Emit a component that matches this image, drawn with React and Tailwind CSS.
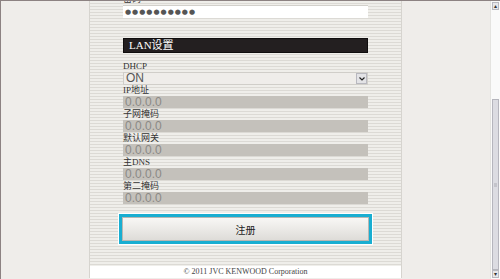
import React from 'react';

const fields = ['IP地址', '子网掩码', '默认网关', '主DNS', '第二掩码'];

const labelCls = "h-[12px] leading-[12px] text-[9px] text-[#333] font-['Liberation_Serif','Noto_Sans_CJK_SC',serif]";

function Field({ label }) {
    return (
        <div>
            <div className={labelCls}>{label}</div>
            <div className="h-[12px] bg-[#c4c1bb] pl-[2px] text-[12px] leading-[12px] text-[#8b8985] font-['Liberation_Sans',sans-serif]">
                0.0.0.0
            </div>
        </div>
    );
}

function Scrollbar() {
    return (
        <div className="w-[10px] flex flex-col bg-[#fafafa] border-l border-[#e4e3e0] pt-[1px] pb-[1px]">
            <div className="h-[8px] mx-[1px] bg-[#e7e7ea] border border-[#b9b9c0] flex items-center justify-center text-[6px] leading-none text-[#333]">
                ▴
            </div>
            <div className="flex-1 flex flex-col">
                <div className="h-[89px]" />
                <div className="flex-1 mx-[1px] bg-[#dcdce2] border border-[#b5b5bd] flex items-center justify-center">
                    <div className="w-[3px] h-[4px] bg-[#c4c4cb]" />
                </div>
            </div>
            <div className="h-[8px] mx-[1px] bg-[#e7e7ea] border border-[#b9b9c0] flex items-center justify-center text-[6px] leading-none text-[#333]">
                ▾
            </div>
        </div>
    );
}

export default function App() {
    return (
        <div className="w-[500px] h-[279px] overflow-hidden flex bg-[#efedea] border-t border-l border-[#8c8282]">
            <div className="flex-1 overflow-hidden">
                <div className="ml-[88px] w-[313px] h-[277px] flex flex-col border-l border-r border-[#d6d4cf] bg-[repeating-linear-gradient(to_bottom,#efeeea_0px,#efeeea_2px,#dcdad5_2px,#dcdad5_3px)]">
                    <div className="flex-1 px-[33px] -mt-[8px]">
                        <div className={labelCls}>密码</div>
                        <div className="h-[13px] bg-white border-t border-[#d2d0cb] pl-[2px] text-[7px] leading-[12px] tracking-[1px] text-[#555] font-['DejaVu_Sans',sans-serif]">
                            ●●●●●●●●●●
                        </div>
                        <div className="mt-[20px] h-[15px] bg-[#231f20] border border-[#100e0e] pl-[5px] text-[11px] leading-[13px] text-white font-['Liberation_Serif','Noto_Sans_CJK_SC',serif]">
                            LAN设置
                        </div>
                        <div className="mt-[7px]">
                            <div className={labelCls}>DHCP</div>
                            <div className="h-[13px] flex bg-[#efedea] border border-[#d0cec9]">
                                <div className="flex-1 pl-[2px] text-[12px] leading-[11px] text-[#555] font-['Liberation_Sans',sans-serif]">
                                    ON
                                </div>
                                <div className="w-[11px] bg-[#e3e3e6] border border-[#b8b8bf] flex items-center justify-center">
                                    <svg width="6" height="4" viewBox="0 0 6 4">
                                        <path d="M0.5 0.5 L3 3 L5.5 0.5" fill="none" stroke="#222" strokeWidth="1.2" />
                                    </svg>
                                </div>
                            </div>
                        </div>
                        <div className="-mt-[1px]">
                            {fields.map((f) => (
                                <Field key={f} label={f} />
                            ))}
                        </div>
                        <div className="mt-[9px] w-[255px] -ml-[5px] border border-white">
                            <div className="border-[3px] border-[#19aed1] bg-white">
                                <div className="h-[24px] bg-[linear-gradient(to_bottom,#f8f7f5,#dedcd8)] border border-[#b9b7b2] flex items-center justify-center text-[10px] text-[#222] font-['Noto_Sans_CJK_SC',sans-serif]">
                                    注册
                                </div>
                            </div>
                        </div>
                    </div>
                    <div className="h-[12px] bg-white text-center text-[8px] leading-[12px] text-[#444] font-['Liberation_Serif',serif]">
                        © 2011 JVC KENWOOD Corporation
                    </div>
                </div>
            </div>
            <Scrollbar />
        </div>
    );
}
